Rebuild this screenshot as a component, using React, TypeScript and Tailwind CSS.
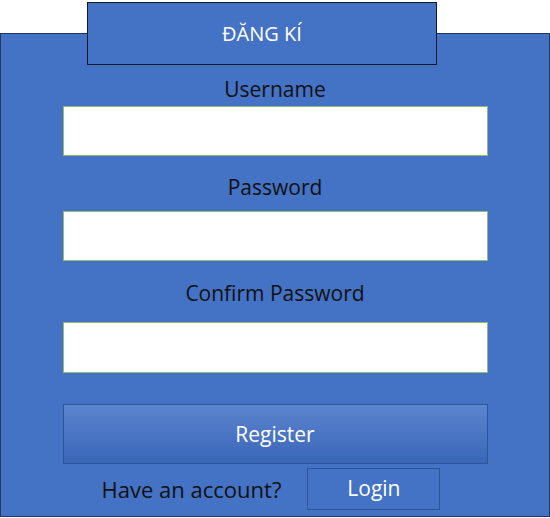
export default function App() {
  return (
    <div className="w-[550px] h-[518px] pt-[33px] bg-white font-['Open_Sans',_'Noto_Sans',_sans-serif]">
      <div className="w-[550px] h-[484px] bg-[#4472c4] border border-[#1f3864] flex flex-col items-center">
        {/* Title */}
        <div className="-mt-[32px] self-start ml-[86px] w-[350px] h-[63px] bg-[#4472c4] border border-[#111827] flex items-center justify-center">
          <span className="text-white text-[20px] leading-[24px]">ĐĂNG KÍ</span>
        </div>

        <label className="mt-[12px] text-[21px] leading-[24px] text-[#111]">Username</label>
        <input className="mt-[5px] w-[425px] h-[50px] bg-white border border-[#8fbf6e] outline-none" />

        <label className="mt-[19px] text-[21px] leading-[24px] text-[#111]">Password</label>
        <input type="password" className="mt-[12px] w-[425px] h-[50px] bg-white border border-[#8fbf6e] outline-none" />

        <label className="mt-[20px] text-[21px] leading-[24px] text-[#111]">Confirm Password</label>
        <input type="password" className="mt-[17px] w-[425px] h-[51px] bg-white border border-[#8fbf6e] outline-none" />

        <button className="mt-[31px] w-[425px] h-[60px] pt-[2px] bg-gradient-to-b from-[#5c85ce] to-[#3a66b9] border border-[#2f5597] text-white text-[21px]">
          Register
        </button>

        <div className="mt-[4px] mr-[8px] flex items-center gap-[26px]">
          <span className="text-[22px] text-[#111]">Have an account?</span>
          <button className="w-[133px] h-[42px] border border-[#2f5597] text-white text-[21px]">
            Login
          </button>
        </div>
      </div>
    </div>
  );
}
